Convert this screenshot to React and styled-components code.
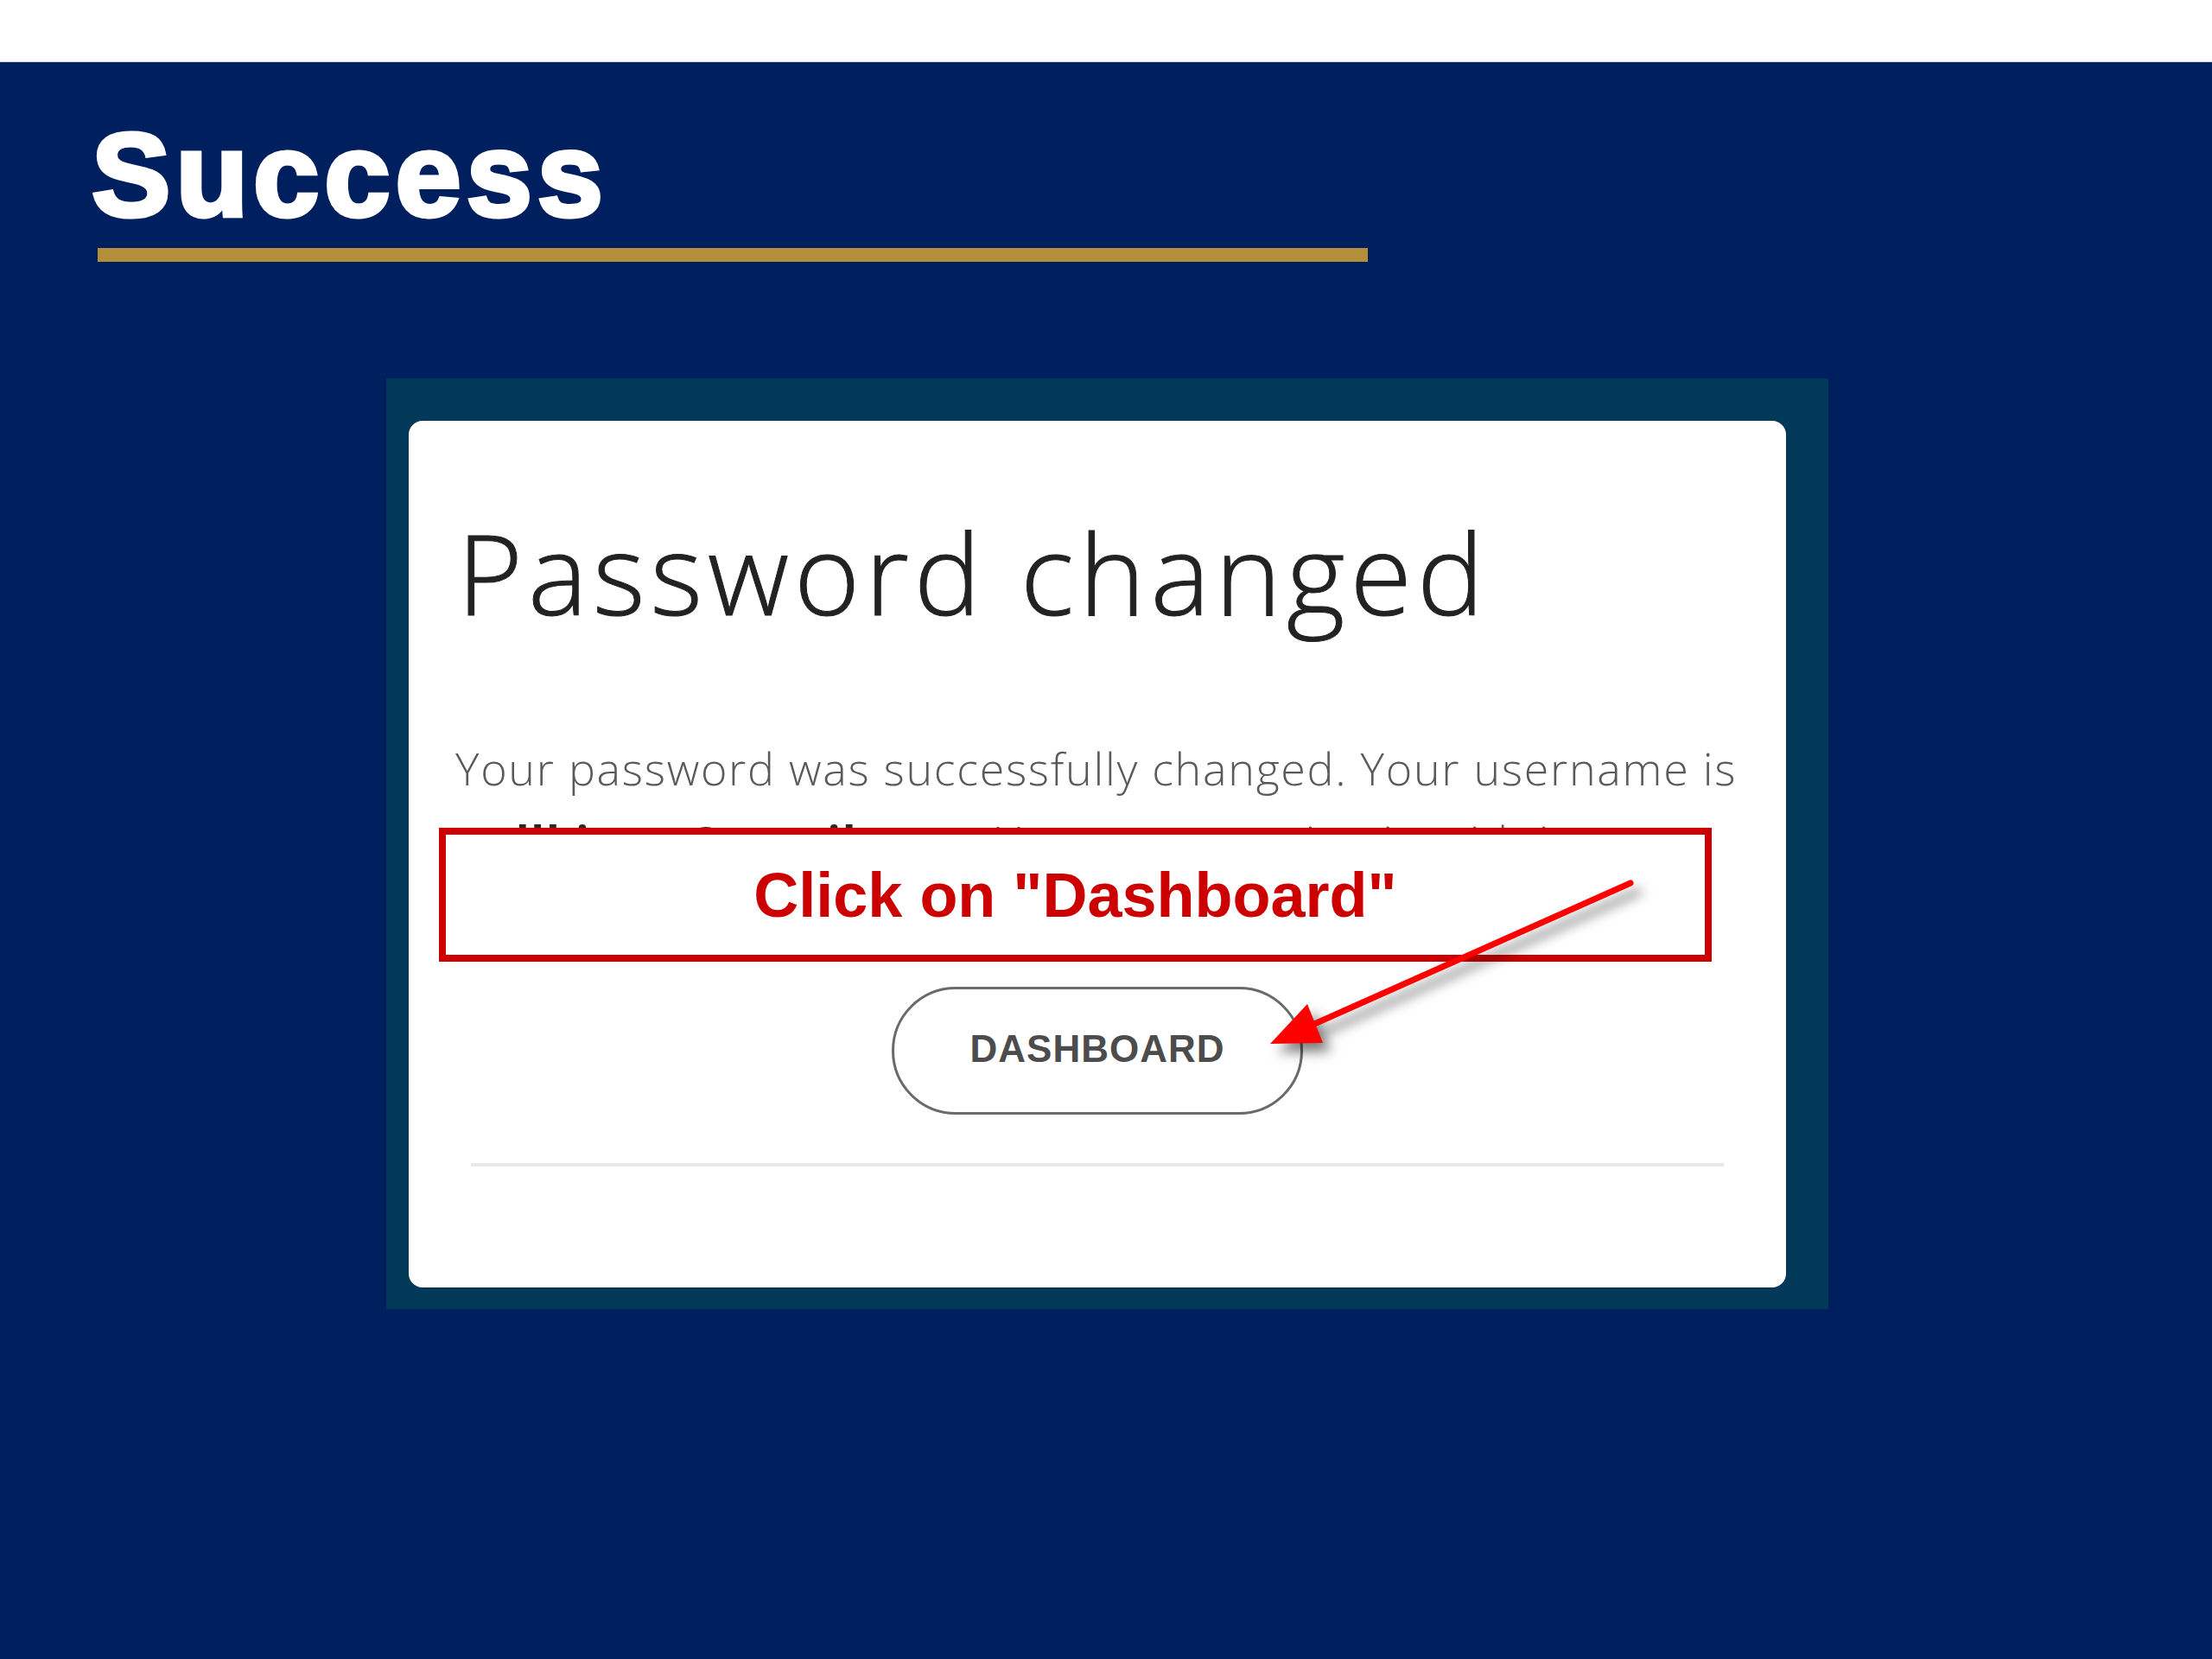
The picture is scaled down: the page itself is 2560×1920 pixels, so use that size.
import styled, { createGlobalStyle } from 'styled-components'

const GlobalStyle = createGlobalStyle`
html, body {
    margin: 0;
    padding: 0;
    background: #ffffff;
}
* {
    box-sizing: border-box;
}
`

const TopStrip = styled.div`
height: 72px;
background: #ffffff;
border-bottom: 1px solid #c9d6ea;
`

const Slide = styled.section`
min-height: 1848px;
background: #001f5f;
padding-top: 62px;
display: flex;
flex-direction: column;
`

const Title = styled.h1`
margin: 0 0 0 106px;
font-family: "Liberation Sans", Arial, sans-serif;
font-weight: 700;
font-size: 137px;
line-height: 137px;
letter-spacing: 6px;
color: #ffffff;
-webkit-text-stroke: 5px #ffffff;
`

const GoldRule = styled.div`
margin: 16px 0 0 113px;
width: 1470px;
height: 16px;
background: #b48f3a;
`

const Frame = styled.div`
margin: 135px 0 0 447px;
width: 1669px;
height: 1077px;
background: #023858;
padding: 49px 49px 25px 26px;
`

const Card = styled.div`
position: relative;
height: 100%;
background: #ffffff;
border-radius: 16px;
padding: 97px 52px 0;
display: flex;
flex-direction: column;
`

const Heading = styled.h2`
margin: 0 0 0 4px;
font-family: "Open Sans", "Liberation Sans", sans-serif;
font-weight: 300;
font-size: 130px;
line-height: 156px;
letter-spacing: 6px;
color: #222222;
-webkit-text-stroke: 1px #222222;
`

const Message = styled.p`
margin: 106px 0 0 2px;
font-family: "Open Sans", "Liberation Sans", sans-serif;
font-weight: 300;
font-size: 52px;
line-height: 85px;
letter-spacing: 1.7px;
color: #5a5a5a;

strong {
    font-weight: 700;
    color: #2a2a2a;
}
`

const ButtonRow = styled.div`
display: flex;
justify-content: center;
margin-top: 126px;
`

const DashButton = styled.button`
width: 476px;
height: 148px;
border: 3px solid #6a6a6a;
border-radius: 74px;
background: #ffffff;
font-family: "Liberation Sans", Arial, sans-serif;
font-weight: 700;
font-size: 44px;
letter-spacing: 1px;
color: #4c4c4c;
padding-bottom: 6px;
cursor: pointer;
`

const Divider = styled.hr`
margin: 56px 20px 0;
border: none;
height: 4px;
background: #e8e8e8;
`

// annotation laid over the screenshot
const Callout = styled.div`
position: absolute;
left: 35px;
top: 471px;
width: 1473px;
height: 155px;
background: #ffffff;
border: 8px solid #cc0000;
display: flex;
align-items: center;
justify-content: center;
font-family: "Liberation Sans", Arial, sans-serif;
font-weight: 700;
font-size: 72px;
color: #cc0000;
`

const Arrow = styled.svg`
position: absolute;
left: 980px;
top: 520px;
overflow: visible;
filter: drop-shadow(9px 10px 7px rgba(0, 0, 0, 0.5));
`

const App = () => {
    return (
        <>
            <GlobalStyle />
            <TopStrip />
            <Slide>
                <Title>Success</Title>
                <GoldRule />
                <Frame>
                    <Card>
                        <Heading>Password changed</Heading>
                        <Message>
                            Your password was successfully changed. Your username is
                            <br />
                            <strong>mdlkitest@gmail.com</strong>. You can now sign in with it.
                        </Message>
                        <ButtonRow>
                            <DashButton>DASHBOARD</DashButton>
                        </ButtonRow>
                        <Divider />
                        <Callout>Click on "Dashboard"</Callout>
                        <Arrow width="450" height="220" viewBox="0 0 450 220">
                            <line x1="434" y1="15" x2="66" y2="179" stroke="#ff0000" strokeWidth="7" strokeLinecap="round" />
                            <polygon points="17,201 60,155 78,200" fill="#ff0000" />
                        </Arrow>
                    </Card>
                </Frame>
            </Slide>
        </>
    )
}

export default App
